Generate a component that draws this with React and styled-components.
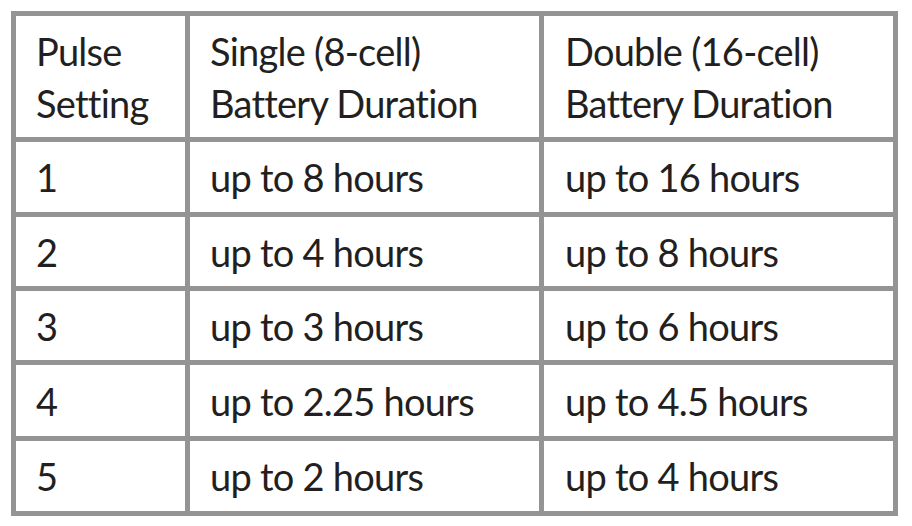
import React from 'react';
import styled, { createGlobalStyle } from 'styled-components';

const GlobalStyle = createGlobalStyle`
  body {
    margin: 0;
    background: #ffffff;
  }
`;

const Page = styled.div`
  padding: 11px 0 0 11px;
`;

const Table = styled.div`
  display: grid;
  grid-template-columns: 169px 349px 349px;
  grid-template-rows: 121px 70px 69px 69px 71px 70px;
  gap: 5px;
  padding: 5px;
  width: max-content;
  background: #949494;
`;

const Cell = styled.div`
  display: flex;
  align-items: center;
  padding-left: ${(p) => (p.$wide ? '21px' : '20px')};
  background: #ffffff;
  color: #231f20;
  font-family: Lato, "Open Sans", sans-serif;
  font-size: 38px;
  letter-spacing: -0.75px;
  line-height: 52px;
  font-variant-ligatures: none;
  white-space: nowrap;
`;

const header = [
  ['Pulse', 'Setting'],
  ['Single (8-cell)', 'Battery Duration'],
  ['Double (16-cell)', 'Battery Duration'],
];

const rows = [
  ['1', 'up to 8 hours', 'up to 16 hours'],
  ['2', 'up to 4 hours', 'up to 8 hours'],
  ['3', 'up to 3 hours', 'up to 6 hours'],
  ['4', 'up to 2.25 hours', 'up to 4.5 hours'],
  ['5', 'up to 2 hours', 'up to 4 hours'],
];

export default function App() {
  return (
    <Page>
      <GlobalStyle />
      <Table>
        {header.map(([a, b], i) => (
          <Cell key={'h' + i} $wide={i === 2}>
            <div>
              {a}
              <br />
              {b}
            </div>
          </Cell>
        ))}
        {rows.map((row, r) =>
          row.map((text, c) => (
            <Cell key={r + '-' + c} $wide={c === 2}>
              {text}
            </Cell>
          ))
        )}
      </Table>
    </Page>
  );
}
